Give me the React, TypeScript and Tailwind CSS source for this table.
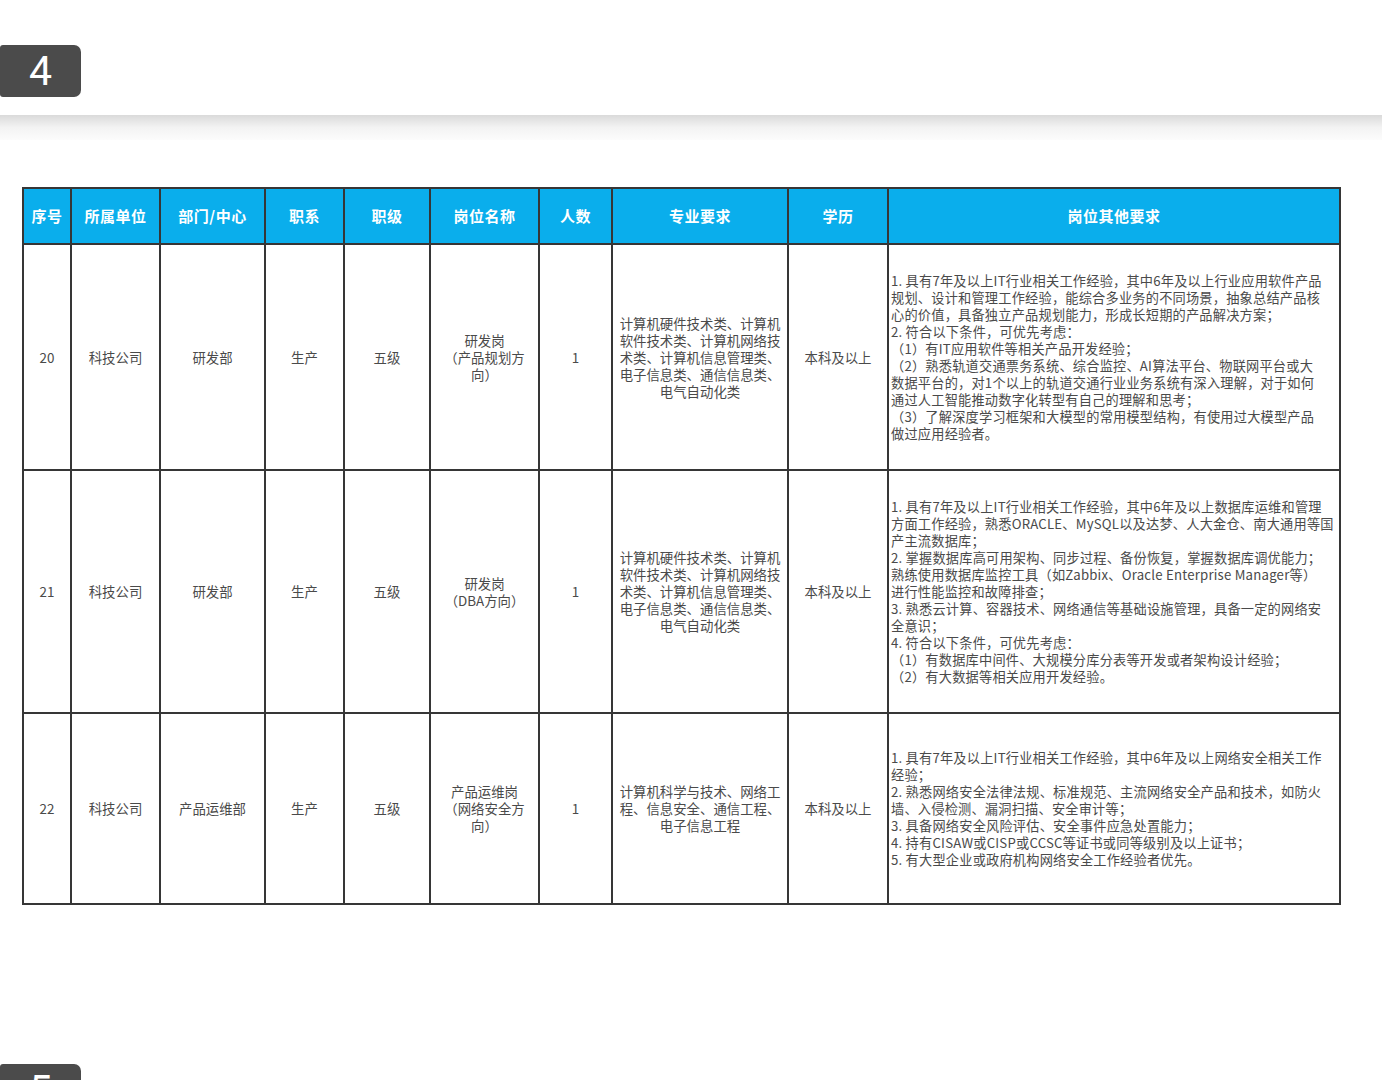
import React from "react";

type Row = {
    no: string;
    unit: string;
    dept: string;
    series: string;
    level: string;
    post: string[];
    count: string;
    major: string[];
    edu: string;
    other: string[];
};

const headers = ["序号", "所属单位", "部门/中心", "职系", "职级", "岗位名称", "人数", "专业要求", "学历", "岗位其他要求"];
const widths = ["w-[48px]", "w-[89px]", "w-[105px]", "w-[79px]", "w-[86px]", "w-[109px]", "w-[73px]", "w-[176px]", "w-[100px]", "w-[452px]"];

const rows: Row[] = [
    {
        no: "20",
        unit: "科技公司",
        dept: "研发部",
        series: "生产",
        level: "五级",
        post: ["研发岗", "（产品规划方", "向）"],
        count: "1",
        major: ["计算机硬件技术类、计算机", "软件技术类、计算机网络技", "术类、计算机信息管理类、", "电子信息类、通信信息类、", "电气自动化类"],
        edu: "本科及以上",
        other: [
            "1. 具有7年及以上IT行业相关工作经验，其中6年及以上行业应用软件产品",
            "规划、设计和管理工作经验，能综合多业务的不同场景，抽象总结产品核",
            "心的价值，具备独立产品规划能力，形成长短期的产品解决方案；",
            "2. 符合以下条件，可优先考虑：",
            "（1）有IT应用软件等相关产品开发经验；",
            "（2）熟悉轨道交通票务系统、综合监控、AI算法平台、物联网平台或大",
            "数据平台的，对1个以上的轨道交通行业业务系统有深入理解，对于如何",
            "通过人工智能推动数字化转型有自己的理解和思考；",
            "（3）了解深度学习框架和大模型的常用模型结构，有使用过大模型产品",
            "做过应用经验者。",
        ],
    },
    {
        no: "21",
        unit: "科技公司",
        dept: "研发部",
        series: "生产",
        level: "五级",
        post: ["研发岗", "（DBA方向）"],
        count: "1",
        major: ["计算机硬件技术类、计算机", "软件技术类、计算机网络技", "术类、计算机信息管理类、", "电子信息类、通信信息类、", "电气自动化类"],
        edu: "本科及以上",
        other: [
            "1. 具有7年及以上IT行业相关工作经验，其中6年及以上数据库运维和管理",
            "方面工作经验，熟悉ORACLE、MySQL以及达梦、人大金仓、南大通用等国",
            "产主流数据库；",
            "2. 掌握数据库高可用架构、同步过程、备份恢复，掌握数据库调优能力；",
            "熟练使用数据库监控工具（如Zabbix、Oracle Enterprise Manager等）",
            "进行性能监控和故障排查；",
            "3. 熟悉云计算、容器技术、网络通信等基础设施管理，具备一定的网络安",
            "全意识；",
            "4. 符合以下条件，可优先考虑：",
            "（1）有数据库中间件、大规模分库分表等开发或者架构设计经验；",
            "（2）有大数据等相关应用开发经验。",
        ],
    },
    {
        no: "22",
        unit: "科技公司",
        dept: "产品运维部",
        series: "生产",
        level: "五级",
        post: ["产品运维岗", "（网络安全方", "向）"],
        count: "1",
        major: ["计算机科学与技术、网络工", "程、信息安全、通信工程、", "电子信息工程"],
        edu: "本科及以上",
        other: [
            "1. 具有7年及以上IT行业相关工作经验，其中6年及以上网络安全相关工作",
            "经验；",
            "2. 熟悉网络安全法律法规、标准规范、主流网络安全产品和技术，如防火",
            "墙、入侵检测、漏洞扫描、安全审计等；",
            "3. 具备网络安全风险评估、安全事件应急处置能力；",
            "4. 持有CISAW或CISP或CCSC等证书或同等级别及以上证书；",
            "5. 有大型企业或政府机构网络安全工作经验者优先。",
        ],
    },
];

const rowHeights = ["h-[226px]", "h-[243px]", "h-[191px]"];

const Lines = ({ lines }: { lines: string[] }) => (
    <>
        {lines.map((l, i) => (
            <div key={i} className="whitespace-nowrap">
                {l}
            </div>
        ))}
    </>
);

const PageBadge = ({ n }: { n: string }) => (
    <div className="w-[81px] h-[52px] bg-[#4b4b4b] rounded-r-[7px] rounded-l-[3px] flex items-center justify-center text-white text-[41px] leading-none font-['Roboto',sans-serif]">
        {n}
    </div>
);

const cell = "border-2 border-[#363636] text-center align-middle";

export default function App() {
    return (
        <div className="w-[1382px] h-[1080px] bg-white overflow-hidden font-['Noto_Sans_CJK_SC','Noto_Sans',sans-serif]">
            <div className="pt-[45px]">
                <PageBadge n="4" />
            </div>

            {/* page edge shadow */}
            <div className="mt-[18px] h-[25px] bg-gradient-to-b from-[#dadada] via-[#f3f3f3] to-[#fcfcfc]"></div>

            <div className="pl-[22px] pt-[47px]">
                <table className="table-fixed border-collapse w-[1316px] text-[#4a4a4a]">
                    <thead>
                        <tr className="h-[56px] bg-[#0aaeec]">
                            {headers.map((h, i) => (
                                <th key={h} className={`${widths[i]} ${cell} text-white text-[15px] font-bold tracking-[0.5px]`}>
                                    {h}
                                </th>
                            ))}
                        </tr>
                    </thead>
                    <tbody className="text-[13.4px] leading-[17px]">
                        {rows.map((r, idx) => (
                            <tr key={r.no} className={rowHeights[idx]}>
                                <td className={cell}>{r.no}</td>
                                <td className={cell}>{r.unit}</td>
                                <td className={cell}>{r.dept}</td>
                                <td className={cell}>{r.series}</td>
                                <td className={cell}>{r.level}</td>
                                <td className={cell}>
                                    <Lines lines={r.post} />
                                </td>
                                <td className={cell}>{r.count}</td>
                                <td className={cell}>
                                    <Lines lines={r.major} />
                                </td>
                                <td className={cell}>{r.edu}</td>
                                <td className={`${cell} !text-left pl-[2px] text-[13.2px] tracking-[0.22px]`}>
                                    <Lines lines={r.other} />
                                </td>
                            </tr>
                        ))}
                    </tbody>
                </table>
            </div>

            <div className="pt-[159px]">
                <PageBadge n="5" />
            </div>
        </div>
    );
}
